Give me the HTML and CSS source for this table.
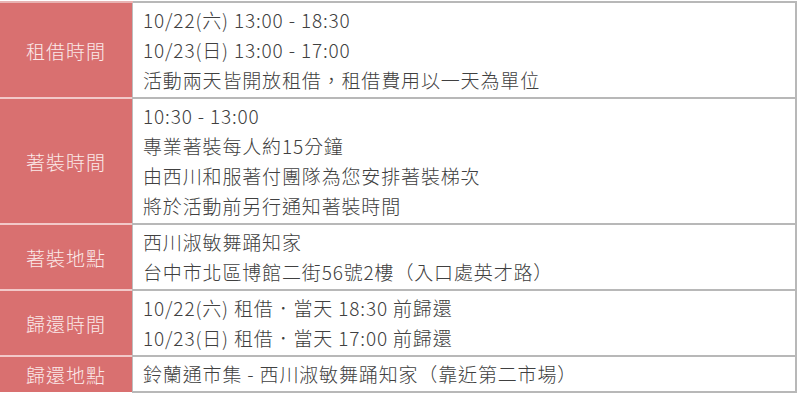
FILE: index.html
```html
<!DOCTYPE html>
<html lang="zh-Hant">
<head>
<meta charset="utf-8">
<link rel="stylesheet" href="styles.css">
</head>
<body>
<table class="info">
  <tr>
    <th>租借時間</th>
    <td>
      <div>10/22(六) 13:00 - 18:30</div>
      <div>10/23(日) 13:00 - 17:00</div>
      <div>活動兩天皆開放租借，租借費用以一天為單位</div>
    </td>
  </tr>
  <tr>
    <th>著裝時間</th>
    <td>
      <div>10:30 - 13:00</div>
      <div>專業著裝每人約15分鐘</div>
      <div>由西川和服著付團隊為您安排著裝梯次</div>
      <div>將於活動前另行通知著裝時間</div>
    </td>
  </tr>
  <tr>
    <th>著裝地點</th>
    <td>
      <div>西川淑敏舞踊知家</div>
      <div>台中市北區博館二街56號2樓（入口處英才路）</div>
    </td>
  </tr>
  <tr>
    <th>歸還時間</th>
    <td>
      <div>10/22(六) 租借．當天 18:30 前歸還</div>
      <div>10/23(日) 租借．當天 17:00 前歸還</div>
    </td>
  </tr>
  <tr>
    <th>歸還地點</th>
    <td>
      <div>鈴蘭通市集 - 西川淑敏舞踊知家（靠近第二市場）</div>
    </td>
  </tr>
</table>
</body>
</html>
```

FILE: styles.css
```css
html, body {
  margin: 0;
  padding: 0;
  background: #ffffff;
}
body {
  padding: 1px 0 0 0;
}
.info {
  border-collapse: collapse;
  width: 797px;
  font-family: "Noto Sans CJK TC", "Noto Sans", sans-serif;
  font-size: 19px;
  font-weight: 300;
  letter-spacing: 0.85px;
  color: #404040;
}
.info th {
  width: 132px;
  padding: 0;
  background: #d97070;
  color: #fbe9e9;
  font-weight: 300;
  text-align: center;
  vertical-align: middle;
  border-top: 2px solid #f2c9c9;
  border-right: 1px solid #bdbdbd;
  letter-spacing: 1px;
}
.info tr:first-child th {
  border-top: 2px solid #e8b3b3;
}
.info td {
  padding: 2px 10px 2px 10px;
  border: 2px solid #b8b8b8;
  border-left: 1px solid #bdbdbd;
  line-height: 30px;
  vertical-align: middle;
}
```
